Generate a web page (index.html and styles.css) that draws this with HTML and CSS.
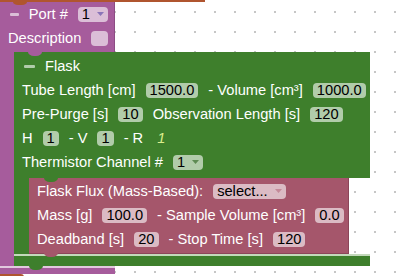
FILE: index.html
```html
<!DOCTYPE html>
<html lang="en">
<head>
  <meta charset="UTF-8" />
  <title>Port block</title>
  <link rel="stylesheet" href="styles.css">
</head>
<body>
  <div class="workspace">
    <div class="stack-top"></div>

    <div class="c-block port">
      <div class="block-head">
        <div class="row">
          <span class="collapse"></span>
          <span class="label">Port #</span>
          <span class="field dropdown">1<svg class="arrow" width="7" height="4" viewBox="0 0 7 4"><polygon points="0,0 7,0 3.5,4"/></svg></span>
        </div>
        <div class="row">
          <span class="label">Description</span>
          <span class="field empty"></span>
        </div>
      </div>

      <div class="statement">
        <div class="arm"></div>

        <div class="c-block flask">
          <div class="block-head">
            <div class="row">
              <span class="collapse"></span>
              <span class="label">Flask</span>
            </div>
            <div class="row">
              <span class="label">Tube Length [cm]</span>
              <span class="field">1500.0</span>
              <span class="label">- Volume [cm³]</span>
              <span class="field">1000.0</span>
            </div>
            <div class="row">
              <span class="label">Pre-Purge [s]</span>
              <span class="field">10</span>
              <span class="label">Observation Length [s]</span>
              <span class="field">120</span>
            </div>
            <div class="row">
              <span class="label">H</span>
              <span class="field">1</span>
              <span class="label">- V</span>
              <span class="field">1</span>
              <span class="label">- R</span>
              <span class="label value">1</span>
            </div>
            <div class="row">
              <span class="label">Thermistor Channel #</span>
              <span class="field dropdown">1<svg class="arrow" width="7" height="4" viewBox="0 0 7 4"><polygon points="0,0 7,0 3.5,4"/></svg></span>
            </div>
          </div>

          <div class="statement">
            <div class="arm"></div>

            <div class="block flux">
              <div class="row">
                <span class="label">Flask Flux (Mass-Based):</span>
                <span class="field dropdown">select...<svg class="arrow" width="7" height="4" viewBox="0 0 7 4"><polygon points="0,0 7,0 3.5,4"/></svg></span>
              </div>
              <div class="row">
                <span class="label">Mass [g]</span>
                <span class="field">100.0</span>
                <span class="label">- Sample Volume [cm³]</span>
                <span class="field">0.0</span>
              </div>
              <div class="row">
                <span class="label">Deadband [s]</span>
                <span class="field">20</span>
                <span class="label">- Stop Time [s]</span>
                <span class="field">120</span>
              </div>
            </div>
          </div>

          <div class="block-foot"></div>
        </div>
      </div>

      <div class="block-foot"></div>
    </div>

    <div class="stack-bottom"></div>
  </div>
</body>
</html>
```

FILE: styles.css
```css
* {
  box-sizing: border-box;
}
body {
  margin: 0;
  font-family: "Liberation Sans", Arial, sans-serif;
  font-size: 11pt;
}
.workspace {
  width: 405px;
  height: 276px;
  overflow: hidden;
  background-color: #fff;
  background-image: radial-gradient(circle at 1px 1px, #c6c6c6 0.9px, transparent 1.3px);
  background-size: 20px 20px;
  background-position: 14px 11px;
}

/* neighbouring blocks above and below */
.stack-top {
  position: relative;
  width: 205px;
  height: 2px;
  background: #b0552f;
}
.stack-top::after {
  content: "";
  position: absolute;
  left: 13px;
  top: 2px;
  width: 14px;
  height: 3px;
  background: #b0552f;
  border-radius: 0 0 5px 5px / 0 0 3px 3px;
  z-index: 3;
}
.stack-bottom {
  width: 24px;
  height: 3px;
  background: #b0552f;
  border-radius: 0 5px 0 0;
}

/* generic block parts */
.c-block {
  display: flex;
  flex-direction: column;
  align-items: flex-start;
}
.block-head {
  position: relative;
  padding: 0 6px 2px 8px;
}
.statement {
  display: flex;
  align-items: stretch;
}
.row {
  display: flex;
  align-items: center;
  gap: 10px;
  height: 24px;
  color: #fff;
  white-space: nowrap;
}
.collapse {
  width: 11px;
  height: 3px;
  margin-left: 2px;
  background: rgba(255, 255, 255, 0.6);
  border-radius: 1px;
}
.field {
  display: inline-flex;
  align-items: center;
  height: 15px;
  line-height: 15px;
  padding: 0 4px;
  color: #000;
  background: rgba(255, 255, 255, 0.6);
  border-radius: 4px;
}
.field.empty {
  width: 19px;
}
.dropdown .arrow {
  margin-left: 7px;
}
.value {
  font-style: italic;
  color: #dcee8c;
  margin-left: 4px;
}

/* port block (purple) */
.port > .block-head {
  width: 115px;
  padding-bottom: 2px;
  background: #a65c9c;
  border-right: 1px solid #8d4c84;
}
.port > .statement > .arm {
  width: 14px;
  background: #a65c9c;
}
.port > .block-foot {
  width: 115px;
  height: 8px;
  background: #a65c9c;
  border-top: 2px solid #e2c9de;
}
.port > .block-head .arrow {
  fill: #8a74b8;
}

/* flask block (green) */
.flask > .block-head {
  padding-top: 2px;
  padding-right: 4px;
  padding-bottom: 4px;
  background: #3e7f2c;
}
.flask > .block-head::before {
  content: "";
  position: absolute;
  left: 14px;
  top: 0;
  width: 14px;
  height: 4px;
  background: #a65c9c;
  border-radius: 0 0 6px 6px / 0 0 4px 4px;
}
.flask > .statement > .arm {
  width: 15px;
  background: #3e7f2c;
}
.flask > .block-foot {
  position: relative;
  align-self: stretch;
  height: 12px;
  background: #3e7f2c;
  border-top: 2px solid #c3d9bb;
}
.flask > .block-foot::after {
  content: "";
  position: absolute;
  left: 15px;
  top: 10px;
  width: 14px;
  height: 4px;
  background: #3e7f2c;
  border-radius: 0 0 6px 6px / 0 0 4px 4px;
  z-index: 2;
}
.flask > .block-head .arrow {
  fill: #5d8a52;
}

/* flux block (red) */
.flux {
  position: relative;
  padding: 1px 4px 2px 8px;
  background: #a5566b;
  border-right: 1px solid #8c4559;
  border-bottom: 1px solid #8c4559;
}
.flux::before {
  content: "";
  position: absolute;
  left: 15px;
  top: 0;
  width: 14px;
  height: 4px;
  background: #3e7f2c;
  border-radius: 0 0 6px 6px / 0 0 4px 4px;
}
.flux::after {
  content: "";
  position: absolute;
  left: 15px;
  top: 100%;
  width: 14px;
  height: 4px;
  background: #a5566b;
  border-radius: 0 0 6px 6px / 0 0 4px 4px;
  z-index: 2;
}
.flux .arrow {
  fill: #c48a99;
}
```
